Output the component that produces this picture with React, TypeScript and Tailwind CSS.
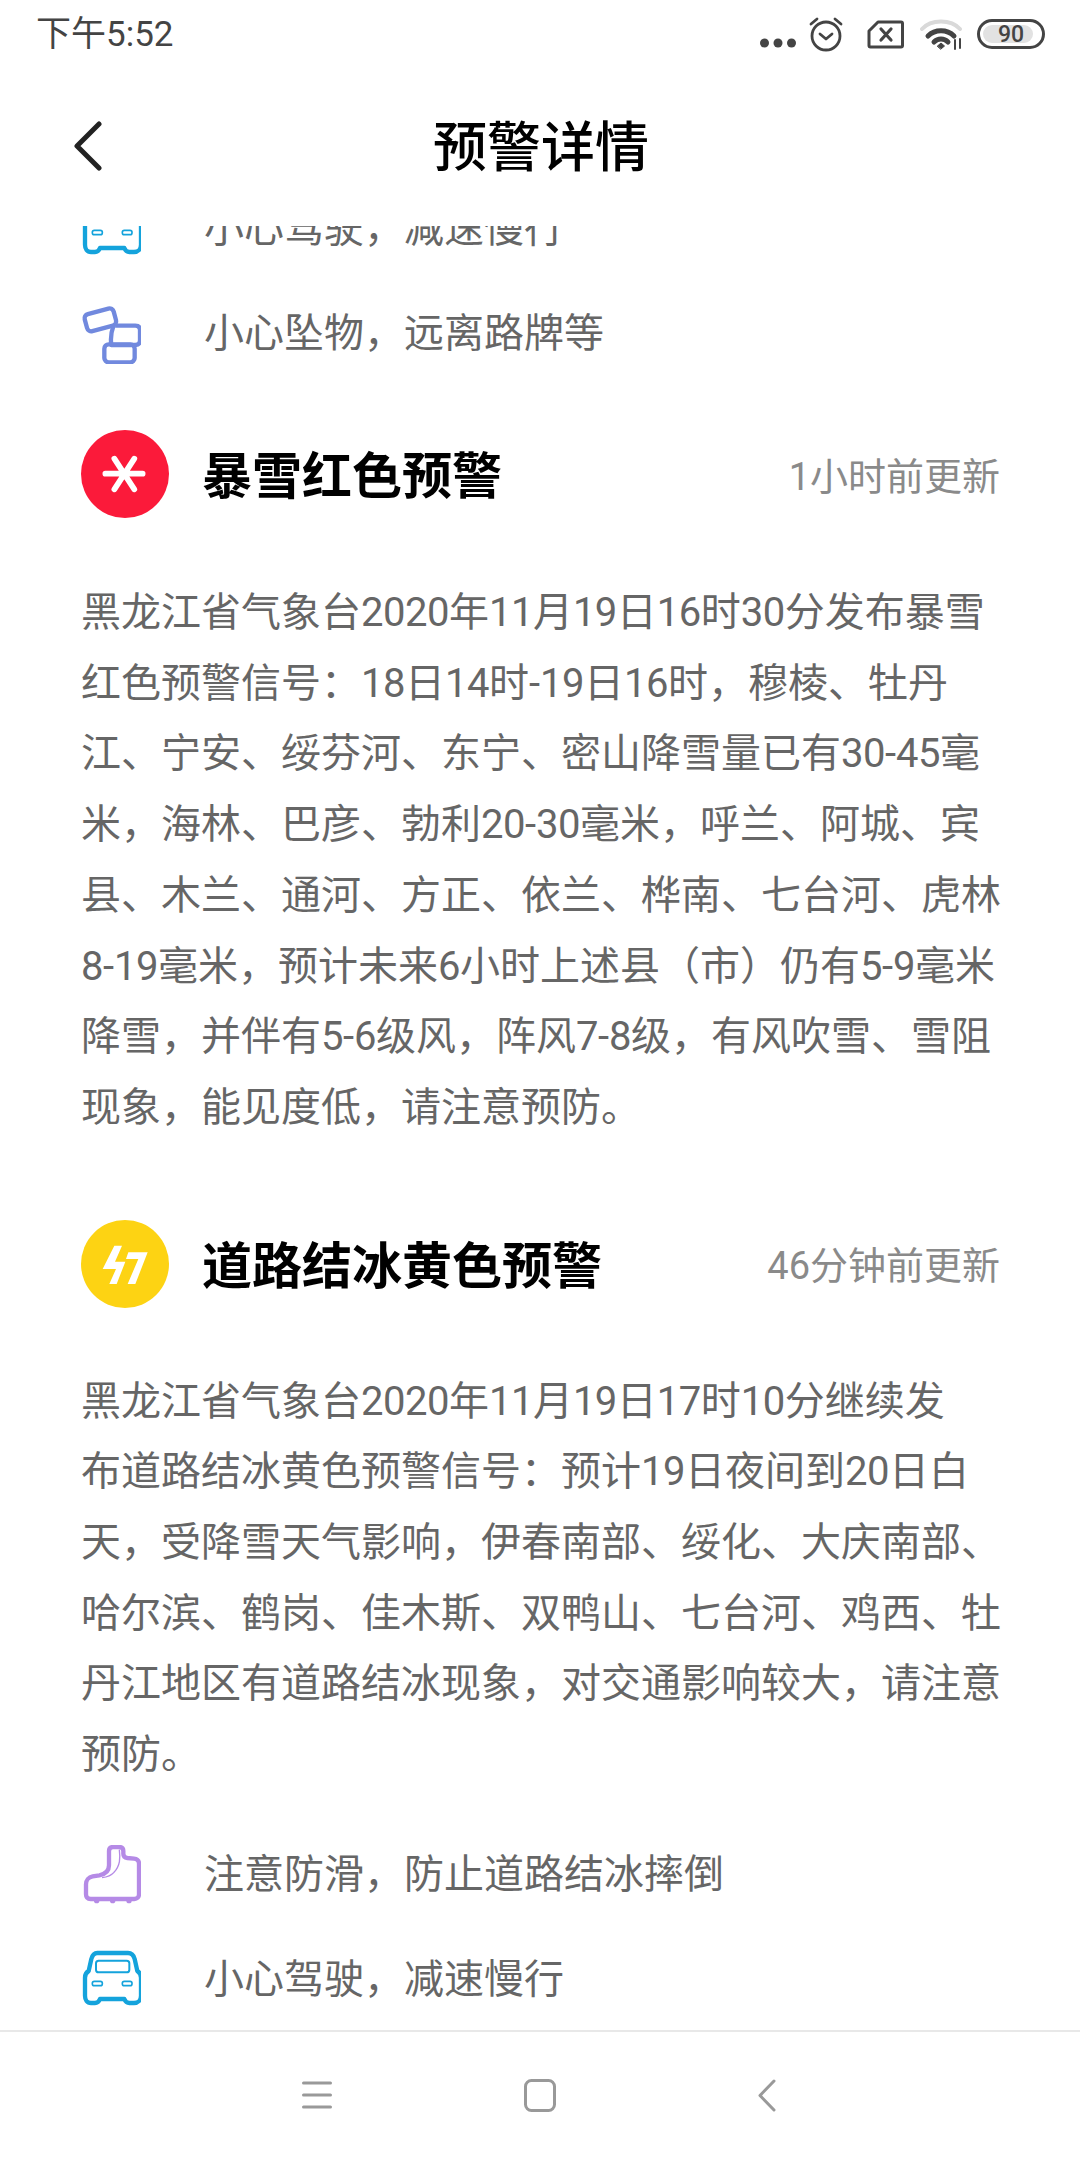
const CJK = "font-['Roboto','Noto_Sans_CJK_SC',sans-serif]";

function Car() {
  return (
    <svg width="60" height="60" viewBox="63 328 180 180" fill="none" stroke="#14a3dc" strokeLinejoin="round" strokeLinecap="round">
      <path d="M112 337h92c10 0 17 7 20 18l8 36c7 4 11 11 11 20v54c0 13-9 22-21 22h-14c-7 0-12-4-15-12h-73c-3 8-8 12-15 12H93c-12 0-18-9-18-22v-54c0-9 4-16 11-20l8-36c3-11 9-18 18-18z" strokeWidth="13" />
      <rect x="108" y="360" width="100" height="35" rx="8" strokeWidth="6" />
      <rect x="97" y="422" width="30" height="13" rx="6" strokeWidth="5" />
      <rect x="187" y="422" width="29" height="13" rx="6" strokeWidth="5" />
    </svg>
  );
}

function Boot() {
  return (
    <svg width="60" height="60" viewBox="63 18 180 180" fill="none" stroke="#b58ae6" strokeLinejoin="round">
      <path d="M147 36c0-8 5-12 12-12h19c8 0 12 4 12 12v8c0 8 4 12 12 13l20 2c9 1 15 6 15 15v92c0 9-6 14-14 14H92c-9 0-14-5-14-14v-30c0-12 8-22 20-24l20-3c17-3 29-12 29-30z" strokeWidth="13" />
      <path d="M178 32c3 25 3 48-16 68-8 9-20 14-36 16" strokeWidth="4" />
      <circle cx="110" cy="185" r="8" fill="#b58ae6" stroke="none" />
      <circle cx="158" cy="185" r="8" fill="#b58ae6" stroke="none" />
      <circle cx="207" cy="185" r="8" fill="#b58ae6" stroke="none" />
    </svg>
  );
}

function Blocks() {
  return (
    <svg width="60" height="60" viewBox="63 305 180 180" fill="none" stroke="#7189de" strokeWidth="13" strokeLinejoin="round">
      <rect x="76" y="326" width="90" height="53" rx="13" transform="rotate(-15 121 352)" />
      <path d="M166 370h60c9 0 14 5 14 14v30c0 9-5 14-14 14h-72c-2-14 0-40 6-56" />
      <rect x="133" y="426" width="91" height="54" rx="13" />
    </svg>
  );
}

function Row({ icon, text }: { icon: React.ReactNode; text: string }) {
  return (
    <div className="flex items-center h-[105px]">
      <div className="w-[123px] flex-none">{icon}</div>
      <span className="text-[40px] leading-none text-[#666] whitespace-nowrap">{text}</span>
    </div>
  );
}

function Heading({ icon, title, time }: { icon: React.ReactNode; title: string; time: string }) {
  return (
    <div className="flex items-center h-[88px]">
      <div className="w-[88px] h-[88px] flex-none">{icon}</div>
      <span className="ml-[33px] mt-[6px] text-[50px] leading-none font-bold text-black whitespace-nowrap">{title}</span>
      <span className="ml-auto mt-[5px] text-[38px] leading-none text-[#8a8a8a] whitespace-nowrap">{time}</span>
    </div>
  );
}

function Body({ lines }: { lines: string[] }) {
  return (
    <div className="text-[40px] leading-[70.7px] text-[#666]">
      {lines.map((l) => (
        <div key={l} className="whitespace-nowrap">
          {l.split(/(\d+)/).map((part, i) =>
            i % 2 === 1 ? (
              <span key={i} className="tracking-[-0.5px]">{part}</span>
            ) : (
              <span key={i}>{part}</span>
            )
          )}
        </div>
      ))}
    </div>
  );
}

export default function App() {
  return (
    <div className={`w-[1080px] h-[2160px] bg-white flex flex-col overflow-hidden ${CJK}`}>
      <div className="h-[66px] flex-none flex items-center pl-[36px] pr-[35px] pt-[2px] text-[#444]">
        <span className="text-[35px] leading-none">下午5:52</span>
        <div className="ml-auto flex items-center">
          <svg width="36" height="10" viewBox="0 0 36 10" fill="#444" className="mt-[18px]">
            <circle cx="4.5" cy="5" r="4.5" /><circle cx="18" cy="5" r="4.5" /><circle cx="31.5" cy="5" r="4.5" />
          </svg>
          <svg width="36" height="36" viewBox="0 0 36 36" fill="none" stroke="#444" strokeWidth="2.8" strokeLinecap="round" strokeLinejoin="round" className="ml-[12px]">
            <circle cx="18" cy="20" r="14" />
            <path d="M12 18l6 5 6-5M3 8l6-5M33 8l-6-5" />
          </svg>
          <svg width="37" height="29" viewBox="0 0 37 29" fill="none" stroke="#444" strokeWidth="3" strokeLinejoin="round" className="ml-[23px]">
            <path d="M11 2h23a1.500 1.500 0 0 1 1.500 1.500v22a1.500 1.500 0 0 1-1.500 1.500H3.500A1.500 1.500 0 0 1 2 25.500V11z" />
            <path d="M14 9l10 11M24 9L14 20" strokeLinecap="round" strokeWidth="3.200" />
          </svg>
          <svg width="44" height="32" viewBox="0 0 44 32" fill="none" strokeLinecap="round" className="ml-[16px]">
            <path d="M2 11C11 1 31 1 40 11" stroke="#d9d9d9" strokeWidth="4" />
            <path d="M8 18c7-7 19-7 26 0" stroke="#444" strokeWidth="5" />
            <path d="M14 24c4-4 10-4 14 0" stroke="#444" strokeWidth="5" />
            <path d="M17.500 28l3.500-3 3.500 3-3.500 3z" fill="#444" stroke="#444" strokeWidth="1" />
            <path d="M35 22v9M40 21v9" stroke="#444" strokeWidth="2" />
          </svg>
          <div className="ml-[13px] w-[68px] h-[30px] rounded-full border-[3px] border-[#444] flex items-center p-[3px] relative">
            <div className="w-[50px] h-full bg-[#e2e2e2] rounded-[9px]"></div>
            <span className="absolute inset-0 flex items-center justify-center text-[23px] leading-none font-medium text-[#444]">90</span>
          </div>
        </div>
      </div>

      <div className="h-[160px] flex-none relative flex items-center justify-center">
        <svg width="30" height="50" viewBox="0 0 30 50" fill="none" stroke="#222" strokeWidth="5" strokeLinecap="round" strokeLinejoin="round" className="absolute left-[73px] top-[55px]">
          <path d="M26 3L4 25l22 22" />
        </svg>
        <h1 className="text-[54px] leading-none font-medium text-black mt-[6px] ml-[2px]">预警详情</h1>
      </div>

      <div className="flex-1 min-h-0 overflow-hidden">
        <div className="mt-[-50px] pl-[81px] pr-[80px] flex flex-col">
          <Row icon={<Car />} text="小心驾驶，减速慢行" />
          <Row icon={<Blocks />} text="小心坠物，远离路牌等" />

          <div className="mt-[44px]"><Heading
            icon={
              <svg width="88" height="88" viewBox="65 60 264 264">
                <circle cx="197" cy="192" r="132" fill="#fb1a3a" />
                <path d="M138 191h112M165 146l60 92M225 146l-60 92" stroke="#fff" strokeWidth="17" strokeLinecap="round" fill="none" />
              </svg>
            }
            title="暴雪红色预警"
            time="1小时前更新"
          /></div>

          <div className="mt-[60px]"><Body lines={[
            "黑龙江省气象台2020年11月19日16时30分发布暴雪",
            "红色预警信号：18日14时-19日16时，穆棱、牡丹",
            "江、宁安、绥芬河、东宁、密山降雪量已有30-45毫",
            "米，海林、巴彦、勃利20-30毫米，呼兰、阿城、宾",
            "县、木兰、通河、方正、依兰、桦南、七台河、虎林",
            "8-19毫米，预计未来6小时上述县（市）仍有5-9毫米",
            "降雪，并伴有5-6级风，阵风7-8级，有风吹雪、雪阻",
            "现象，能见度低，请注意预防。",
          ]} /></div>

          <div className="mt-[76px]"><Heading
            icon={
              <svg width="88" height="88" viewBox="65 28 264 264">
                <circle cx="197" cy="160" r="132" fill="#fdd313" />
                <path d="M165 105h23l-21 48h31l-26 67h-22l20-45h-40zM207 125h58l-37 95h-23l32-75h-37z" fill="#fff" />
              </svg>
            }
            title="道路结冰黄色预警"
            time="46分钟前更新"
          /></div>

          <div className="mt-[59px]"><Body lines={[
            "黑龙江省气象台2020年11月19日17时10分继续发",
            "布道路结冰黄色预警信号：预计19日夜间到20日白",
            "天，受降雪天气影响，伊春南部、绥化、大庆南部、",
            "哈尔滨、鹤岗、佳木斯、双鸭山、七台河、鸡西、牡",
            "丹江地区有道路结冰现象，对交通影响较大，请注意",
            "预防。",
          ]} /></div>

          <div className="mt-[32px]">
            <Row icon={<Boot />} text="注意防滑，防止道路结冰摔倒" />
            <Row icon={<Car />} text="小心驾驶，减速慢行" />
          </div>
        </div>
      </div>

      <div className="h-[130px] flex-none border-t-2 border-[#e8e8e8]">
        <div className="h-full flex items-center pl-[302px] pb-[2px]">
          <svg width="30" height="28" viewBox="0 0 30 28" stroke="#999" strokeWidth="3" strokeLinecap="round">
            <path d="M1.500 2h27M1.500 14h27M1.500 26h27" />
          </svg>
          <svg width="32" height="33" viewBox="0 0 32 33" fill="none" stroke="#999" strokeWidth="3" className="ml-[192px]">
            <rect x="1.500" y="1.500" width="29" height="30" rx="6" />
          </svg>
          <svg width="18" height="33" viewBox="0 0 18 33" fill="none" stroke="#999" strokeWidth="3" strokeLinecap="round" strokeLinejoin="round" className="ml-[202px]">
            <path d="M16 2L2 16.500 16 31" />
          </svg>
        </div>
      </div>
    </div>
  );
}
